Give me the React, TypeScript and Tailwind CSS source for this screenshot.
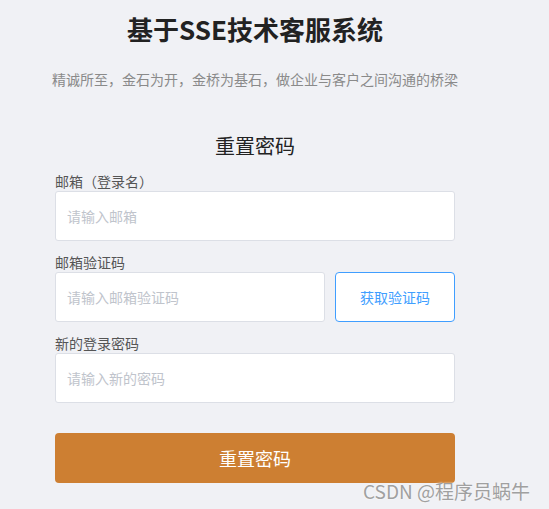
import { useState } from 'react';

const font = { fontFamily: '"Noto Sans CJK SC", "Noto Sans", sans-serif' };

export default function App() {
  const [email, setEmail] = useState('');
  const [code, setCode] = useState('');
  const [password, setPassword] = useState('');

  return (
    <div className="relative min-h-[509px] w-full bg-[#f0f1f5]" style={font}>
      <div className="w-[510px] flex flex-col items-center">
        <h1 className="mt-[13px] text-[26px] leading-[32px] font-bold text-[#222]">基于SSE技术客服系统</h1>
        <p className="mt-[24px] text-[14px] leading-[20px] text-[#8a8a8a]">
          精诚所至，金石为开，金桥为基石，做企业与客户之间沟通的桥梁
        </p>
        <h2 className="mt-[44px] text-[20px] leading-[26px] text-[#222]">重置密码</h2>

        <form className="mt-[12px] w-[400px] flex flex-col" onSubmit={(e) => e.preventDefault()}>
          <label className="h-[20px] text-[14px] leading-[20px] text-[#555]">邮箱（登录名）</label>
          <input
            className="h-[50px] rounded-[3px] border border-[#dcdfe6] bg-white px-[11px] text-[14px] text-[#606266] outline-none placeholder:text-[#c0c4cc]"
            placeholder="请输入邮箱"
            value={email}
            onChange={(e) => setEmail(e.target.value)}
          />

          <label className="mt-[11px] h-[20px] text-[14px] leading-[20px] text-[#555]">邮箱验证码</label>
          <div className="flex gap-[10px]">
            <input
              className="h-[50px] w-[270px] rounded-[3px] border border-[#dcdfe6] bg-white px-[11px] text-[14px] text-[#606266] outline-none placeholder:text-[#c0c4cc]"
              placeholder="请输入邮箱验证码"
              value={code}
              onChange={(e) => setCode(e.target.value)}
            />
            <button
              type="button"
              className="h-[50px] w-[120px] rounded-[4px] border border-[#409eff] bg-white text-[14px] text-[#409eff]"
            >
              获取验证码
            </button>
          </div>

          <label className="mt-[11px] h-[20px] text-[14px] leading-[20px] text-[#555]">新的登录密码</label>
          <input
            type="password"
            className="h-[50px] rounded-[3px] border border-[#dcdfe6] bg-white px-[11px] text-[14px] text-[#606266] outline-none placeholder:text-[#c0c4cc]"
            placeholder="请输入新的密码"
            value={password}
            onChange={(e) => setPassword(e.target.value)}
          />

          <button type="submit" className="mt-[30px] h-[50px] rounded-[4px] bg-[#cd7f32] text-[18px] text-white">
            重置密码
          </button>
        </form>
      </div>

      <div className="absolute left-[363px] top-[479px] text-[19px] leading-[24px] text-[#a0a0a0] [text-shadow:0_0_2px_#fff]">
        CSDN @程序员蜗牛
      </div>
    </div>
  );
}
